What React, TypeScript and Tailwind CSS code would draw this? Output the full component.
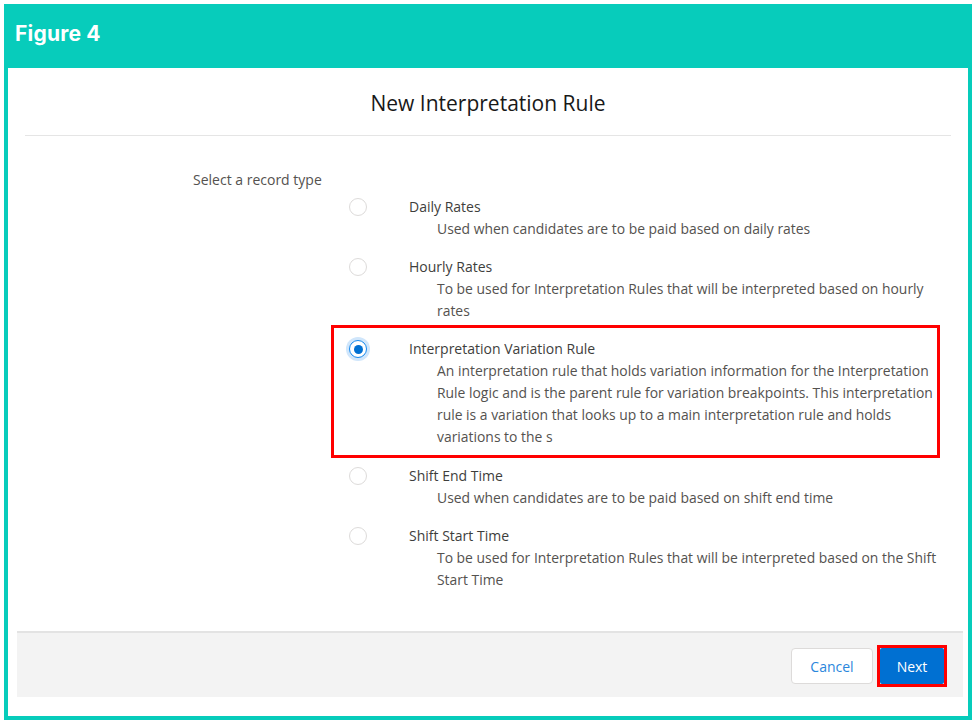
import React from "react";

const FONT = { fontFamily: '"Open Sans", "Noto Sans", sans-serif' };

function Radio({ checked }: { checked?: boolean }) {
  if (checked) {
    return (
      <span className="flex h-[18px] w-[18px] items-center justify-center rounded-full border border-[#1589ee] bg-white shadow-[0_0_0_3px_#d0e6fb]">
        <span className="h-[9px] w-[9px] rounded-full bg-[#0070d2]" />
      </span>
    );
  }
  return <span className="block h-[18px] w-[18px] rounded-full border border-[#dddbda] bg-white" />;
}

type Item = { label: string; lines: string[]; checked?: boolean };

const items: Item[] = [
  { label: "Daily Rates", lines: ["Used when candidates are to be paid based on daily rates"] },
  {
    label: "Hourly Rates",
    lines: ["To be used for Interpretation Rules that will be interpreted based on hourly", "rates"],
  },
  {
    label: "Interpretation Variation Rule",
    checked: true,
    lines: [
      "An interpretation rule that holds variation information for the Interpretation",
      "Rule logic and is the parent rule for variation breakpoints. This interpretation",
      "rule is a variation that looks up to a main interpretation rule and holds",
      "variations to the s",
    ],
  },
  { label: "Shift End Time", lines: ["Used when candidates are to be paid based on shift end time"] },
  {
    label: "Shift Start Time",
    lines: ["To be used for Interpretation Rules that will be interpreted based on the Shift", "Start Time"],
  },
];

function Row({ item }: { item: Item }) {
  return (
    <div className={"relative flex" + (item.checked ? " mb-[1px]" : "")}>
      {item.checked && (
        <div className="pointer-events-none absolute -top-[13px] -bottom-[10px] -left-[18px] w-[609px] border-[3px] border-[#ff0000]" />
      )}
      <div className="w-[60px] pt-[2px]">
        <Radio checked={item.checked} />
      </div>
      <div className="flex flex-col">
        <div className="text-[14px] leading-[22px] text-[#3e3e3c] whitespace-nowrap">{item.label}</div>
        <div className="pl-[28px] text-[13.9px] leading-[22px] text-[#54524f]">
          {item.lines.map((l, i) => (
            <div key={i} className="whitespace-nowrap">
              {l}
            </div>
          ))}
        </div>
      </div>
    </div>
  );
}

export default function App() {
  return (
    <div className="h-[724px] w-[976px] bg-white p-[4px]" style={FONT}>
      <div className="flex h-[716px] flex-col bg-[#07ccbb] px-[4px] pb-[4px]">
        <div className="flex h-[64px] items-center pl-[7px] pb-[4px]">
          <span
            className="text-[21px] font-bold text-white"
            style={{ fontFamily: 'Inter, "Noto Sans", sans-serif', letterSpacing: "0.2px" }}
          >
            Figure 4
          </span>
        </div>
        <div className="flex flex-1 flex-col bg-white">
          <div className="mx-[17px] border-b border-[#e5e5e5] pt-[21px] pb-[18px] text-center text-[21px] leading-[28px] text-[#181818]">
            New Interpretation Rule
          </div>
          <div className="flex pt-[34px]">
            <div className="w-[341px] pl-[185px] text-[14px] leading-[20px] text-[#54524f] whitespace-nowrap">
              Select a record type
            </div>
          </div>
          <div className="flex flex-col gap-4 pl-[341px] pt-[6px]">
            {items.map((it) => (
              <Row key={it.label} item={it} />
            ))}
          </div>
          <div className="flex-1" />
          <div className="mb-[19px] ml-[9px] mr-[5px] flex h-[66px] items-center justify-end gap-[4px] border-t-2 border-[#e3e3e3] bg-[#f3f3f3] pr-[16px] pt-[2px]">
            <button className="h-[36px] w-[82px] rounded-[4px] border border-[#dddbda] bg-white text-[14px] text-[#2a86dc]">
              Cancel
            </button>
            <div className="border-[3px] border-[#ff0000]">
              <button className="block h-[36px] w-[64px] rounded-[2px] bg-[#0070d2] text-[14px] text-white">
                Next
              </button>
            </div>
          </div>
        </div>
      </div>
    </div>
  );
}
